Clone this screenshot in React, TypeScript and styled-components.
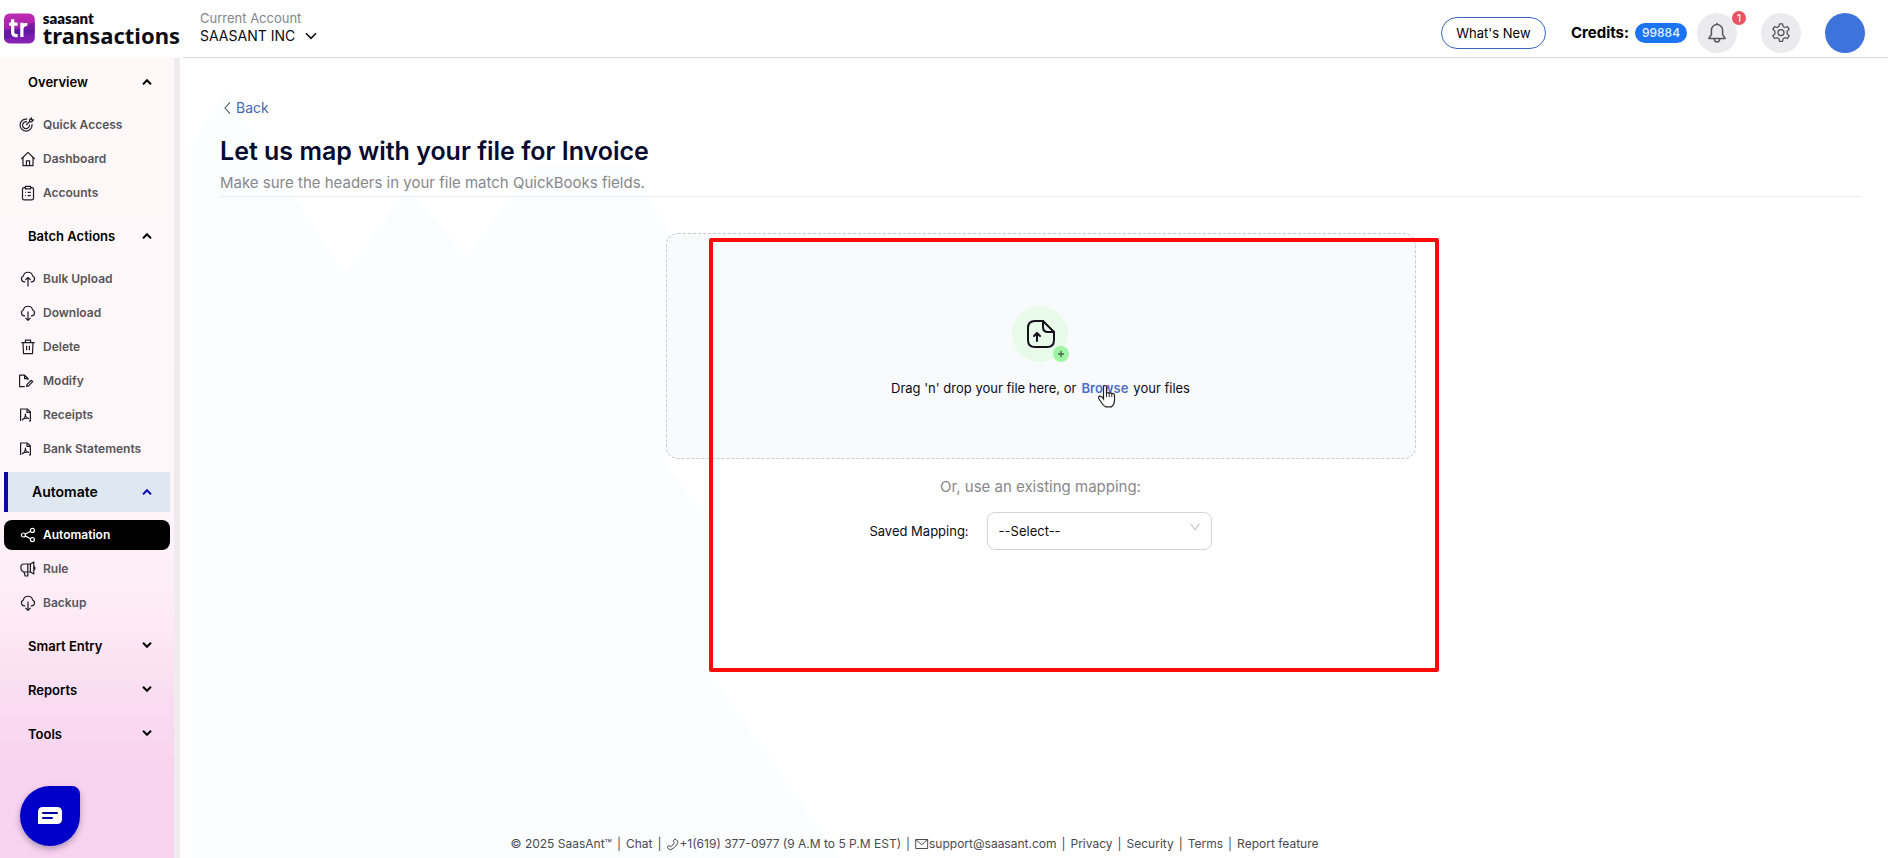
import React from 'react';
import styled, { createGlobalStyle, css } from 'styled-components';

const Global = createGlobalStyle`
  *, *::before, *::after { box-sizing: border-box; }
  body { margin: 0; background: #fff; color: #0b0b14; font: 14px/20px Inter, "Liberation Sans", sans-serif; }
  button, select, input { font: inherit; color: inherit; }
  a { color: inherit; text-decoration: none; }
  ul { list-style: none; margin: 0; padding: 0; }
  h1, p { margin: 0; }
`;

const Page = styled.div`
  min-height: 100vh;
  display: flex;
  flex-direction: column;
`;
const Header = styled.header`
  height: 58px;
  display: flex;
`;
const Brand = styled.a`
  width: 180px;
  flex: none;
  display: flex;
  align-items: center;
  gap: 8px;
  padding: 0 0 2px 4px;
`;
const BrandText = styled.span`
  display: flex;
  flex-direction: column;
  padding-bottom: 3px;
  color: #0c0c12;
`;
const BrandTop = styled.span`
  font: 800 15px/16px Lato, sans-serif;
`;
const BrandName = styled.span`
  font: 700 22px/18px "Noto Sans", sans-serif;
`;
const TopBar = styled.div`
  flex: 1;
  display: flex;
  align-items: center;
  justify-content: space-between;
  padding: 0 23px 0 17px;
  margin-left: 3px;
  border-bottom: 1px solid #d9d9d9;
`;
const Account = styled.div`
  display: flex;
  flex-direction: column;
  align-items: flex-start;
  padding-bottom: 4px;
`;
const AccountLabel = styled.span`
  font-size: 13px;
  line-height: 18px;
  color: #85858a;
`;
const AccountButton = styled.button`
  display: flex;
  align-items: center;
  gap: 10px;
  border: 0;
  padding: 0;
  background: none;
  font-size: 14px;
  line-height: 18px;
`;
const Tools = styled.div`
  display: flex;
  align-items: center;
  padding-top: 8px;
`;
const WhatsNew = styled.button`
  width: 105px;
  height: 32px;
  border: 1px solid #3a66c0;
  border-radius: 16px;
  background: #fff;
  padding: 0;
  font-size: 13px;
  color: #000;
`;
const Credits = styled.span`
  margin-left: 25px;
  font-size: 15px;
  font-weight: 700;
  color: #000;
`;
const CreditCount = styled.span`
  width: 52px;
  height: 20px;
  margin: 0 10px 0 6px;
  border-radius: 10px;
  background: #1d74f0;
  color: #e8f2ff;
  font-size: 12px;
  font-weight: 500;
  text-align: center;
`;
const RoundButton = styled.button`
  position: relative;
  width: 40px;
  height: 40px;
  display: grid;
  place-items: center;
  border: 0;
  border-radius: 50%;
  background: #ebebed;
  color: #55555a;
  padding: 0;
  margin-right: 24px;
`;
const Badge = styled.span`
  position: absolute;
  top: -2px;
  right: -9px;
  width: 14px;
  height: 14px;
  border-radius: 50%;
  background: #e9535f;
  color: #fff;
  font-size: 11px;
  line-height: 14px;
`;
const Avatar = styled.button`
  width: 40px;
  height: 40px;
  border: 0;
  border-radius: 50%;
  background: #3f73dc;
`;

const Body = styled.div`
  flex: 1;
  display: flex;
`;
const Sidebar = styled.nav`
  width: 180px;
  flex: none;
  padding: 2px 4px 0;
  border-right: 6px solid #f0ebee;
  background: linear-gradient(#fff8f9, #fff6f9 55%, #fdeaf5 70%, #fadcf1 80%, #f9d2ef 90%, #f9d2ef);
`;
const Group = styled.button<{ $current?: boolean }>`
  width: 100%;
  height: 44px;
  display: flex;
  align-items: center;
  justify-content: space-between;
  padding: 0 18px 0 24px;
  border: 0;
  background: none;
  font-size: 13px;
  font-weight: 600;
  color: #000;
  ${p => p.$current && css`
    height: 40px;
    margin: 2px 0;
    border-left: 4px solid #0a0a9c;
    background: #dfe7f0;
    font-size: 14px;
    svg { color: #0a0ab4; }
  `}
`;
const Items = styled.ul`
  display: flex;
  flex-direction: column;
  gap: 4px;
  padding: 6px 0;
`;
const Item = styled.a<{ $active?: boolean }>`
  display: flex;
  align-items: center;
  gap: 7px;
  height: 30px;
  padding-left: 16px;
  border-radius: 8px;
  font-size: 12px;
  font-weight: 600;
  color: ${p => (p.$active ? '#fff' : '#55555a')};
  background: ${p => (p.$active ? '#000' : 'none')};
  svg { color: ${p => (p.$active ? '#fff' : '#1c1c24')}; }
`;

const Main = styled.main`
  flex: 1;
  display: flex;
  flex-direction: column;
  position: relative;
  z-index: 0;
  padding: 40px 27px 0 40px;
`;
const Backdrop = styled.svg`
  position: absolute;
  z-index: -1;
  left: 11px;
  top: 0;
  height: 100%;
`;
const Back = styled.a`
  display: flex;
  align-items: center;
  align-self: flex-start;
  gap: 3px;
  padding-left: 3px;
  color: #4468b4;
  svg { color: #55555a; }
`;
const Title = styled.h1`
  margin-top: 16px;
  font-size: 25px;
  line-height: 34px;
  font-weight: 600;
  color: #050a30;
`;
const Subtitle = styled.p`
  padding: 5px 0 3px;
  border-bottom: 1px solid #ececef;
  font-size: 15px;
  line-height: 20px;
  color: #88888c;
`;
const Upload = styled.section`
  width: 750px;
  max-width: 100%;
  margin: 36px auto 0;
  display: flex;
  flex-direction: column;
  align-items: center;
`;
const DropZone = styled.div`
  width: 100%;
  height: 226px;
  display: flex;
  flex-direction: column;
  align-items: center;
  gap: 15px;
  padding-top: 71px;
  border: 1px dashed #c9cbcf;
  border-radius: 12px;
  background: #f9fafc;
`;
const DropText = styled.p`
  display: flex;
  gap: 5px;
  font-size: 13px;
`;
const Browse = styled.button`
  position: relative;
  border: 0;
  padding: 0;
  background: none;
  font-weight: 600;
  color: #4a6fc4;
`;
const Pointer = styled.svg`
  position: absolute;
  left: 16px;
  top: 6px;
`;
const Or = styled.p`
  margin-top: 18px;
  font-size: 15px;
  color: #88888c;
`;
const Mapping = styled.div`
  display: flex;
  align-items: center;
  gap: 18px;
  margin-top: 15px;
  font-size: 13px;
`;
const SelectBox = styled.span`
  position: relative;
  svg { position: absolute; right: 12px; top: 10px; color: #b5b5ba; pointer-events: none; }
`;
const Select = styled.select`
  width: 225px;
  height: 38px;
  appearance: none;
  border: 1px solid #d4d4d8;
  border-radius: 8px;
  background: #fff;
  padding: 0 11px;
`;
const Highlight = styled.div`
  position: absolute;
  left: calc(50% - 325px);
  top: 180px;
  width: 730px;
  height: 434px;
  border: 4px solid #fb0a0a;
  border-radius: 2px;
  pointer-events: none;
`;
const Footer = styled.footer`
  display: flex;
  justify-content: center;
  gap: 5px;
  margin: auto 210px 5px 0;
  padding-right: 42px;
  font-size: 12px;
  line-height: 18px;
  color: #4a4a50;
  white-space: nowrap;
  a { display: flex; align-items: center; }
`;
const Chat = styled.button`
  position: fixed;
  left: 20px;
  bottom: 12px;
  width: 60px;
  height: 60px;
  display: grid;
  place-items: center;
  border: 0;
  border-radius: 50% 8px 50% 50%;
  background: #0000c8;
  box-shadow: 0 3px 6px rgba(0, 0, 60, 0.3);
`;

const paths: Record<string, string[]> = {
  target: ['M7.3 2.2A6 6 0 1 0 12 7.2', 'M7 4.8A3.5 3.5 0 1 0 9.5 7.6', 'M6.2 8l4-4M9.6 4.8V2.8L11.5 1v1.8h2l-1.8 2z'],
  home: ['M1.2 8 8 1.4 14.8 8', 'M3 6.6V14.6H13V6.6', 'M6.4 14.5V9.8h3.2v4.7'],
  clipboard: ['M5.4 2.6H4q-1.5 0-1.5 1.5v9.2q0 1.500 1.5 1.500h8q1.500 0 1.500-1.500V4.100q0-1.500-1.500-1.500h-1.400', 'M5.4 1.3h5.2v2.6H5.4z', 'M5.2 7.4h.8M7.6 7.4h3.2M5.2 10.6h.8M7.6 10.6h3.2'],
  up: ['M5.2 10.8H4.4A3 3 0 0 1 3.4 5a4.7 4.7 0 0 1 9.2 0 3 3 0 0 1-1 5.8h-.8', 'M8 15.6V6.8M5.4 9 8 6.4 10.6 9'],
  down: ['M5.2 10.8H4.4A3 3 0 0 1 3.4 5a4.7 4.7 0 0 1 9.2 0 3 3 0 0 1-1 5.8h-.8', 'M8 6.4v8.4M5.4 12.8 8 15.4l2.6-2.6'],
  trash: ['M1.4 3.6h13.2M5.4 3.4V1.2h5.2v2.2M3 3.8l.5 10.8h9L13 3.8', 'M6.6 6.8v4.4M9.4 6.8v4.4'],
  modify: ['M4.8 13.6H-.4V2.2H4.6l3.4 3.3v1.8M4.6 2.4v3.3h3.4', 'M6.6 13.4l.5-2 4.2-4.1 1.4 1.4-4.1 4.2z'],
  pdf: ['M9 13.9h1.4V5L7.2 2H.6v12', 'M7 2.2v3.2h3.4', 'M2.4 12.6c1.4-.6 3-3 3-5.4 0 2 1.4 4 3.2 4.2-2-.3-4.4 0-6.2 1.2z'],
  share: ['M5.4 8a2 2 0 1 1-4 0 2 2 0 0 1 4 0z', 'M14.4 3.4a2 2 0 1 1-4 0 2 2 0 0 1 4 0z', 'M14.4 12.6a2 2 0 1 1-4 0 2 2 0 0 1 4 0z', 'M5.2 7.2l5.3-2.9M5.2 8.9l5.3 2.8'],
  horn: ['M10.4 3v8M10.4 3 13.800 1v12l-3.400-2M10.400 3H4a3 3 0 0 0-3 4 4 4 0 0 0 3 4h6.400M14 5.600a1.800 1.800 0 0 1 0 3.200', 'M4 11l1.200 4h2.600V3'],
};

const Icon = ({ name }: { name: string }) => (
  <svg width="16" height="16" viewBox="0 0 16 16" overflow="visible" fill="none" stroke="currentColor" strokeWidth="1.2" strokeLinejoin="round" aria-hidden="true">
    {paths[name].map(d => <path key={d} d={d} />)}
  </svg>
);

const Chevron = ({ up }: { up?: boolean }) => (
  <svg width="10" height="8" viewBox="0 0 10 8" fill="none" stroke="currentColor" strokeWidth="2" aria-hidden="true">
    <path d={up ? 'M1 6.4 5 2.2l4 4.2' : 'M1 .8 5 4.8l4-4'} />
  </svg>
);

type Entry = [icon: string, label: string];
const groups: { title: string; items?: Entry[] }[] = [
  { title: 'Overview', items: [['target', 'Quick Access'], ['home', 'Dashboard'], ['clipboard', 'Accounts']] },
  {
    title: 'Batch Actions',
    items: [['up', 'Bulk Upload'], ['down', 'Download'], ['trash', 'Delete'], ['modify', 'Modify'], ['pdf', 'Receipts'], ['pdf', 'Bank Statements']],
  },
  { title: 'Automate', items: [['share', 'Automation'], ['horn', 'Rule'], ['down', 'Backup']] },
  { title: 'Smart Entry' },
  { title: 'Reports' },
  { title: 'Tools' },
];

const Logo = () => (
  <svg width="32" height="31" viewBox="0 0 32 31" aria-hidden="true">
    <defs>
      <linearGradient id="logo" x1="0" y1="0" x2="0" y2="1">
        <stop offset="0" stopColor="#c02bb0" />
        <stop offset="0.5" stopColor="#a321ad" />
        <stop offset="0.55" stopColor="#6a1ba6" />
        <stop offset="1" stopColor="#8a22b4" />
      </linearGradient>
    </defs>
    <rect width="32" height="31" rx="6" fill="url(#logo)" />
    <path d="M0 19 17 15 32 9V20L16 23 0 27z" fill="#5618a0" opacity="0.6" />
    <g fill="none" stroke="#fff" strokeWidth="3.4">
      <path d="M9 6v13.4q0 3.4 3.4 3.4h1.8M5.4 11h8.8" />
      <path d="M18.6 24.4V9.6M18.6 16q0-4.8 5.6-4.8" />
    </g>
  </svg>
);

export default function App() {
  return (
    <Page>
      <Global />
      <Header>
        <Brand href="#" aria-label="saasant transactions">
          <Logo />
          <BrandText>
            <BrandTop>saasant</BrandTop>
            <BrandName>transactions</BrandName>
          </BrandText>
        </Brand>
        <TopBar>
          <Account>
            <AccountLabel>Current Account</AccountLabel>
            <AccountButton>
              SAASANT INC
              <svg width="12" height="8" viewBox="0 0 12 8" fill="none" stroke="currentColor" strokeWidth="1.6" aria-hidden="true"><path d="M1 1.2 6 6.4l5-5.2" /></svg>
            </AccountButton>
          </Account>
          <Tools>
            <WhatsNew>What's New</WhatsNew>
            <Credits>Credits:</Credits>
            <CreditCount>99884</CreditCount>
            <RoundButton aria-label="Notifications">
              <svg width="20" height="22" viewBox="0 0 20 22" fill="none" stroke="currentColor" strokeWidth="1.5" strokeLinejoin="round">
                <path d="M10 2.6a5.6 5.6 0 0 0-5.6 5.6v4.4L1.8 16.4h16.4l-2.6-3.8V8.2A5.6 5.6 0 0 0 10 2.6zM10 2.6V.8M7.2 16.6a2.8 3.4 0 0 0 5.6 0" />
              </svg>
              <Badge>1</Badge>
            </RoundButton>
            <RoundButton aria-label="Settings">
              <svg width="20" height="20" viewBox="0 0 20 20" fill="none" stroke="currentColor" strokeWidth="1.3" strokeLinejoin="round">
                <path d="M8.5 .8h3l.6 2.7 1.8 1 2.6-.8 1.6 2.7-2 1.9v2.6l2 1.9-1.6 2.7-2.6-.8-1.8 1-.6 2.7h-3l-.6-2.7-1.8-1-2.6.8-1.6-2.7 2-1.9V8.3l-2-1.9 1.6-2.7 2.6.8 1.8-1z" />
                <circle cx="10" cy="9.6" r="3" />
              </svg>
            </RoundButton>
            <Avatar aria-label="Profile" />
          </Tools>
        </TopBar>
      </Header>
      <Body>
        <Sidebar>
          {groups.map(g => (
            <React.Fragment key={g.title}>
              <Group $current={g.title === 'Automate'}>
                {g.title}
                <Chevron up={!!g.items} />
              </Group>
              {g.items && (
                <Items>
                  {g.items.map(([icon, label]) => (
                    <li key={label}>
                      <Item href="#" $active={label === 'Automation'}>
                        <Icon name={icon} />
                        {label}
                      </Item>
                    </li>
                  ))}
                </Items>
              )}
            </React.Fragment>
          ))}
        </Sidebar>
        <Main>
          <Backdrop width="650" height="800" viewBox="0 0 650 800" preserveAspectRatio="xMinYMin slice" aria-hidden="true">
            <path fill="#fbfdff" d="M0 90 34 34 154 217 216 130 276 199 345 105H440L478 176V412L518 460V613L649 800H0z" />
          </Backdrop>
          <Back href="#">
            <svg width="10" height="14" viewBox="0 0 10 14" fill="none" stroke="currentColor" strokeWidth="1.1" aria-hidden="true"><path d="M7 1.4 2 7l5 5.6" /></svg>
            Back
          </Back>
          <Title>Let us map with your file for Invoice</Title>
          <Subtitle>Make sure the headers in your file match QuickBooks fields.</Subtitle>
          <Upload>
            <DropZone>
              <svg width="60" height="58" viewBox="0 0 60 58" fill="none" aria-hidden="true">
                <circle cx="29" cy="29" r="28" fill="#e8fbea" />
                <g stroke="#14101c" strokeWidth="2" strokeLinecap="round" strokeLinejoin="round">
                  <path d="M32 16h-8q-7 0-7 7v12q0 7 7 7h12q7 0 7-7v-8z" />
                  <path d="M32 16v6q0 5 5 5h6" />
                  <path d="M26 36v-8M23 31l3-3 3 3" />
                </g>
                <circle cx="50" cy="49" r="8" fill="#a0f5a4" />
                <path d="M50 46v6M47 49h6" stroke="#4a6a4e" strokeWidth="1.5" />
              </svg>
              <DropText>
                Drag 'n' drop your file here, or
                <Browse>
                  Browse
                  <Pointer width="20" height="25" viewBox="0 0 20 25" aria-hidden="true">
                    <path d="M6.5 14V3.2q0-1.7 1.5-1.7t1.5 1.7V9q1.3-1 2.6.2 1.5-.8 2.6.4 1.9-.6 2.8 1.2v5.4q0 4-3 6.6H8.5Q6.2 21.5 4 18L1.6 14.2q-.4-1.7 1.4-2 1.7 0 3.5 2.6z" fill="#fff" stroke="#222" strokeWidth="1.2" />
                    <path d="M9.5 9v4M12.2 9.4v3.8M14.8 10v3.2" stroke="#222" />
                  </Pointer>
                </Browse>
                your files
              </DropText>
            </DropZone>
            <Or>Or, use an existing mapping:</Or>
            <Mapping>
              <label htmlFor="mapping">Saved Mapping:</label>
              <SelectBox>
                <Select id="mapping"><option>--Select--</option></Select>
                <svg width="10" height="10" viewBox="0 0 10 10" fill="none" stroke="currentColor" aria-hidden="true"><path d="M.6 1.6 5 8l4.4-6.4" /></svg>
              </SelectBox>
            </Mapping>
          </Upload>
          <Footer>
            <span>© 2025 SaasAnt™</span>
            <span>|</span><a href="#">Chat</a>
            <span>|</span>
            <a href="#">
              <svg width="13" height="13" viewBox="0 0 13 13" fill="none" stroke="currentColor" aria-hidden="true"><path d="M9 .9 12 3.4q-.4 5-8 8.6L1 9.4l2-1.8 1.9 1Q7.4 7 8.4 4.4L7.2 2.8z" /></svg>
              +1(619) 377-0977 (9 A.M to 5 P.M EST)
            </a>
            <span>|</span>
            <a href="#">
              <svg width="14" height="12" viewBox="0 0 14 12" fill="none" stroke="currentColor" aria-hidden="true"><path d="M.7 1.5h12v9H.7zM.8 1.7l5.9 5 5.9-5" /></svg>
              support@saasant.com
            </a>
            <span>|</span><a href="#">Privacy</a>
            <span>|</span><a href="#">Security</a>
            <span>|</span><a href="#">Terms</a>
            <span>|</span><a href="#">Report feature</a>
          </Footer>
          <Highlight />
        </Main>
      </Body>
      <Chat aria-label="Open chat">
        <svg width="24" height="18" viewBox="0 0 24 18" aria-hidden="true">
          <path d="M5 0h14q5 0 5 5v7q0 5-5 5H0V5q0-5 5-5z" fill="#fff" />
          <path d="M5 6h14M5 11h9" stroke="#0000a0" strokeWidth="2" strokeLinecap="round" />
        </svg>
      </Chat>
    </Page>
  );
}
